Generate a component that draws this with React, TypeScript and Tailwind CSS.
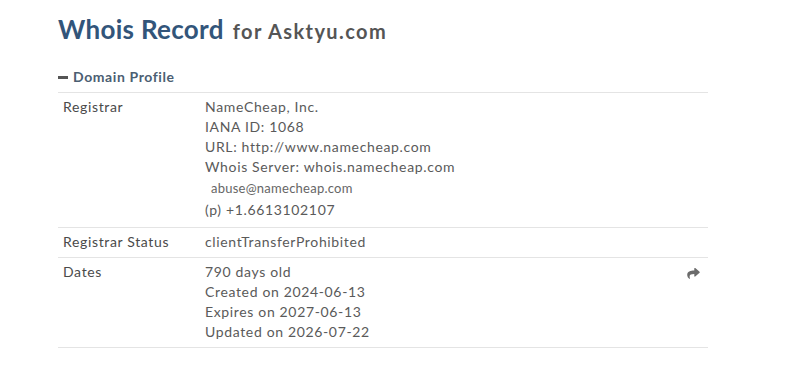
import React from 'react';

const rowBorder = 'border-t border-[#e4e4e4]';

const ShareIcon = () => (
  <svg width="13" height="11" viewBox="0 0 512 448" className="fill-[#6b6b6b]">
    <path d="M503.7 154.3l-176-152C312.3-11 288 0 288 20.8v80C127.4 102.6 0 134.8 0 287.1c0 61.5 39.6 122.4 83.4 154.2 13.6 9.9 33.1-2.5 28.1-18.6C66.1 278 132.4 243.9 288 241.7V330c0 20.8 24.3 31.8 39.7 18.5l176-152c11.1-9.6 11.1-26.7 0-36.2z" />
  </svg>
);

const Row: React.FC<{ label: string; children: React.ReactNode; action?: React.ReactNode }> = ({ label, children, action }) => (
  <div className={`flex ${rowBorder} pt-[4px] pb-[5px]`}>
    <div className="w-[147px] shrink-0 pl-[5px] text-[#4a4a4a]">{label}</div>
    <div className="flex-1 text-[#5a5a5a]">{children}</div>
    {action && <div className="pr-[8px] pt-[6px]">{action}</div>}
  </div>
);

export default function App() {
  return (
    <div className="h-[365px] w-[800px] bg-white font-['Lato','Open_Sans',sans-serif]">
      <div className="pl-[58px] pt-[11px] w-[708px]">
        <h1 className="flex items-baseline gap-[9px] leading-[36px]">
          <span className="text-[26px] font-bold tracking-[0.3px] text-[#32557a]">Whois Record</span>
          <span className="text-[20px] font-bold tracking-[1.4px] text-[#555]">for Asktyu.com</span>
        </h1>
        <div className="mt-[18px] flex items-center gap-[5px] pb-[5px] text-[14px] font-bold text-[#4b5e72] leading-[20px] tracking-[0.6px]">
          <span className="inline-block h-[3px] w-[10px] bg-[#555]" />
          <span>Domain Profile</span>
        </div>
        <div className="text-[14px] leading-[20px] tracking-[0.65px]">
          <Row label="Registrar">
            <div>NameCheap, Inc.</div>
            <div>IANA ID: 1068</div>
            <div>URL: http://www.namecheap.com</div>
            <div>Whois Server: whois.namecheap.com</div>
            <div className="pl-[6px] text-[13px] leading-[23px] tracking-[0.25px] text-[#666]">abuse@namecheap.com</div>
            <div className="mb-[2px]">(p) +1.6613102107</div>
          </Row>
          <Row label="Registrar Status">
            <div>clientTransferProhibited</div>
          </Row>
          <Row label="Dates" action={<ShareIcon />}>
            <div>790 days old</div>
            <div>Created on 2024-06-13</div>
            <div>Expires on 2027-06-13</div>
            <div>Updated on 2026-07-22</div>
          </Row>
          <div className={rowBorder} />
        </div>
      </div>
    </div>
  );
}
